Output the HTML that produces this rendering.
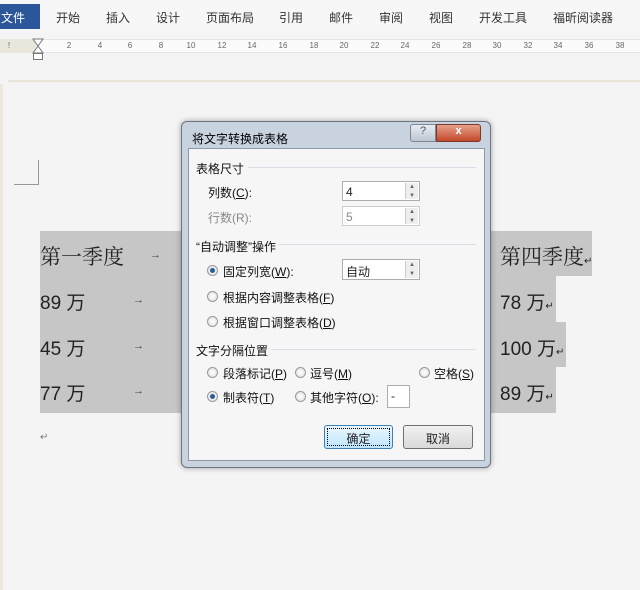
<!DOCTYPE html>
<html><head><meta charset="utf-8"><style>
*{margin:0;padding:0;box-sizing:border-box}
body{width:640px;height:590px;overflow:hidden;background:#f4f4f4;position:relative;font-family:"Liberation Sans","Noto Sans CJK SC",sans-serif;font-size:12px;color:#222}
.a{position:absolute}
.tab{position:absolute;top:9px;font-size:12px;color:#333}
.g{position:absolute;background:#c6c6c6}
.big{position:absolute;font-family:"Liberation Serif","Noto Serif CJK SC",serif;font-size:21px;color:#222}
.num{position:absolute;font-size:19px;color:#222}
.arr{position:absolute;font-size:11px;color:#444}
.t{position:absolute;font-size:12px;color:#111;white-space:nowrap}
.rad{position:absolute;width:11px;height:11px;border-radius:50%;border:1px solid #999;background:radial-gradient(#fff,#ddd)}
.rad.on::after{content:"";position:absolute;left:2px;top:2px;width:5px;height:5px;border-radius:50%;background:#2a5c9a}
.box{position:absolute;border:1px solid #abadb3;background:#fff;font-size:12px;padding:3px 0 0 3px}
.spin{position:absolute;right:1px;top:1px;bottom:1px;width:13px;border-left:1px solid #ccc;background:#eee;font-size:6px;color:#666;text-align:center;line-height:9px}
.line{position:absolute;height:1px;background:#d8dde6}
.r{position:absolute;top:41px;font-size:8px;color:#666;transform:translateX(-50%)}
.tk{position:absolute;top:43px;width:1px;height:5px;background:#aaa}
u{text-decoration:underline}
</style></head><body>
<div class="a" style="left:0;top:0;width:640px;height:32px;background:#f7f7f7"></div>
<div class="a" style="left:0;top:4px;width:40px;height:25px;background:#2b579a;color:#fff;font-size:12px;padding:5px 0 0 1px">文件</div>
<div class="tab" style="left:56px">开始</div><div class="tab" style="left:106px">插入</div><div class="tab" style="left:156px">设计</div><div class="tab" style="left:206px">页面布局</div><div class="tab" style="left:279px">引用</div><div class="tab" style="left:329px">邮件</div><div class="tab" style="left:379px">审阅</div><div class="tab" style="left:429px">视图</div><div class="tab" style="left:479px">开发工具</div><div class="tab" style="left:553px">福昕阅读器</div>
<div class="a" style="left:0;top:39px;width:640px;height:14px;background:#fbfbfb;border-top:1px solid #e3e3e3;border-bottom:1px solid #e3e3e3"></div>
<div class="a" style="left:0;top:39px;width:36px;height:14px;background:#e9e6dc"></div>
<div class="r" style="left:9px">!</div>
<div class="r" style="left:69px">2</div><div class="r" style="left:100px">4</div><div class="r" style="left:130px">6</div><div class="r" style="left:161px">8</div><div class="r" style="left:191px">10</div><div class="r" style="left:222px">12</div><div class="r" style="left:252px">14</div><div class="r" style="left:283px">16</div><div class="r" style="left:314px">18</div><div class="r" style="left:344px">20</div><div class="r" style="left:375px">22</div><div class="r" style="left:405px">24</div><div class="r" style="left:436px">26</div><div class="r" style="left:467px">28</div><div class="r" style="left:497px">30</div><div class="r" style="left:528px">32</div><div class="r" style="left:558px">34</div><div class="r" style="left:589px">36</div><div class="r" style="left:620px">38</div>
<svg class="a" style="left:32px;top:38px" width="12" height="23"><path d="M1 1H11L6 8L11 15H1L6 8Z" fill="#fff" stroke="#777"/><rect x="1.5" y="15.5" width="9" height="6" fill="#fff" stroke="#777"/></svg>
<div class="a" style="left:8px;top:80px;width:632px;height:2px;background:#e8e4d8"></div>
<div class="a" style="left:0;top:84px;width:3px;height:506px;background:#ece8dc"></div>
<div class="a" style="left:38px;top:160px;width:1px;height:25px;background:#999"></div>
<div class="a" style="left:14px;top:184px;width:25px;height:1px;background:#999"></div>

<div class="g" style="left:40px;top:231px;width:145px;height:182px"></div>
<div class="g" style="left:488px;top:231px;width:104px;height:45px"></div>
<div class="g" style="left:488px;top:276px;width:68px;height:46px"></div>
<div class="g" style="left:488px;top:322px;width:78px;height:45px"></div>
<div class="g" style="left:488px;top:367px;width:68px;height:46px"></div>
<div class="big" style="left:40px;top:241px">第一季度</div>
<div class="arr" style="left:150px;top:249px">→</div>
<div class="num" style="left:40px;top:288px">89 万</div><div class="arr" style="left:133px;top:294px">→</div>
<div class="num" style="left:40px;top:334px">45 万</div><div class="arr" style="left:133px;top:340px">→</div>
<div class="num" style="left:40px;top:379px">77 万</div><div class="arr" style="left:133px;top:385px">→</div>
<div class="big" style="left:500px;top:241px">第四季度<span style="font-size:10px">↵</span></div>
<div class="num" style="left:500px;top:288px">78 万<span style="font-size:10px">↵</span></div>
<div class="num" style="left:500px;top:334px">100 万<span style="font-size:10px">↵</span></div>
<div class="num" style="left:500px;top:379px">89 万<span style="font-size:10px">↵</span></div>
<div class="a" style="left:40px;top:432px;font-size:10px;color:#777">↵</div>

<div class="a" style="left:181px;top:121px;width:310px;height:347px;border-radius:6px;background:#c9d3df;border:1px solid #6b7685;box-shadow:0 0 6px rgba(0,0,0,.35)"></div>
<div class="t" style="left:192px;top:130px;color:#000">将文字转换成表格</div>
<div class="a" style="left:410px;top:124px;width:26px;height:18px;background:linear-gradient(#e8edf3,#bcc6d2);border:1px solid #7d8794;border-radius:3px 0 0 3px;font-size:11px;color:#555;text-align:center">?</div>
<div class="a" style="left:436px;top:124px;width:45px;height:18px;background:linear-gradient(#e6a28c,#c4472a);border:1px solid #7a3a2a;border-radius:0 3px 3px 0;color:#fff;font-weight:bold;font-size:11px;text-align:center">x</div>
<div class="a" style="left:188px;top:148px;width:297px;height:313px;background:#f6f6f6;border:1px solid #8e99a6"></div>
<div class="t" style="left:196px;top:160px">表格尺寸</div><div class="line" style="left:248px;top:167px;width:228px"></div>
<div class="t" style="left:208px;top:184px">列数(<u>C</u>):</div>
<div class="box" style="left:342px;top:181px;width:78px;height:20px">4<div class="spin">▲<br>▼</div></div>
<div class="t" style="left:208px;top:209px;color:#888">行数(R):</div>
<div class="box" style="left:342px;top:206px;width:78px;height:20px;color:#888;border-color:#ccc">5<div class="spin">▲<br>▼</div></div>
<div class="t" style="left:196px;top:238px">“自动调整”操作</div><div class="line" style="left:278px;top:244px;width:198px"></div>
<div class="rad on" style="left:207px;top:265px"></div><div class="t" style="left:223px;top:263px">固定列宽(<u>W</u>):</div>
<div class="box" style="left:342px;top:259px;width:78px;height:21px">自动<div class="spin">▲<br>▼</div></div>
<div class="rad" style="left:207px;top:291px"></div><div class="t" style="left:223px;top:289px">根据内容调整表格(<u>F</u>)</div>
<div class="rad" style="left:207px;top:316px"></div><div class="t" style="left:223px;top:314px">根据窗口调整表格(<u>D</u>)</div>
<div class="t" style="left:196px;top:342px">文字分隔位置</div><div class="line" style="left:272px;top:349px;width:204px"></div>
<div class="rad" style="left:207px;top:367px"></div><div class="t" style="left:223px;top:365px">段落标记(<u>P</u>)</div>
<div class="rad" style="left:295px;top:367px"></div><div class="t" style="left:310px;top:365px">逗号(<u>M</u>)</div>
<div class="rad" style="left:419px;top:367px"></div><div class="t" style="left:434px;top:365px">空格(<u>S</u>)</div>
<div class="rad on" style="left:207px;top:391px"></div><div class="t" style="left:223px;top:389px">制表符(<u>T</u>)</div>
<div class="rad" style="left:295px;top:391px"></div><div class="t" style="left:310px;top:389px">其他字符(<u>O</u>):</div>
<div class="box" style="left:387px;top:385px;width:23px;height:23px">-</div>
<div class="a" style="left:324px;top:425px;width:69px;height:24px;border:1px solid #3c7fb1;border-radius:3px;background:linear-gradient(#eaf6fd,#bee6fd);text-align:center;padding-top:4px;outline:1px dotted #000;outline-offset:-4px">确定</div>
<div class="a" style="left:403px;top:425px;width:70px;height:24px;border:1px solid #707070;border-radius:3px;background:linear-gradient(#f2f2f2,#d9d9d9);text-align:center;padding-top:4px">取消</div>
</body></html>
